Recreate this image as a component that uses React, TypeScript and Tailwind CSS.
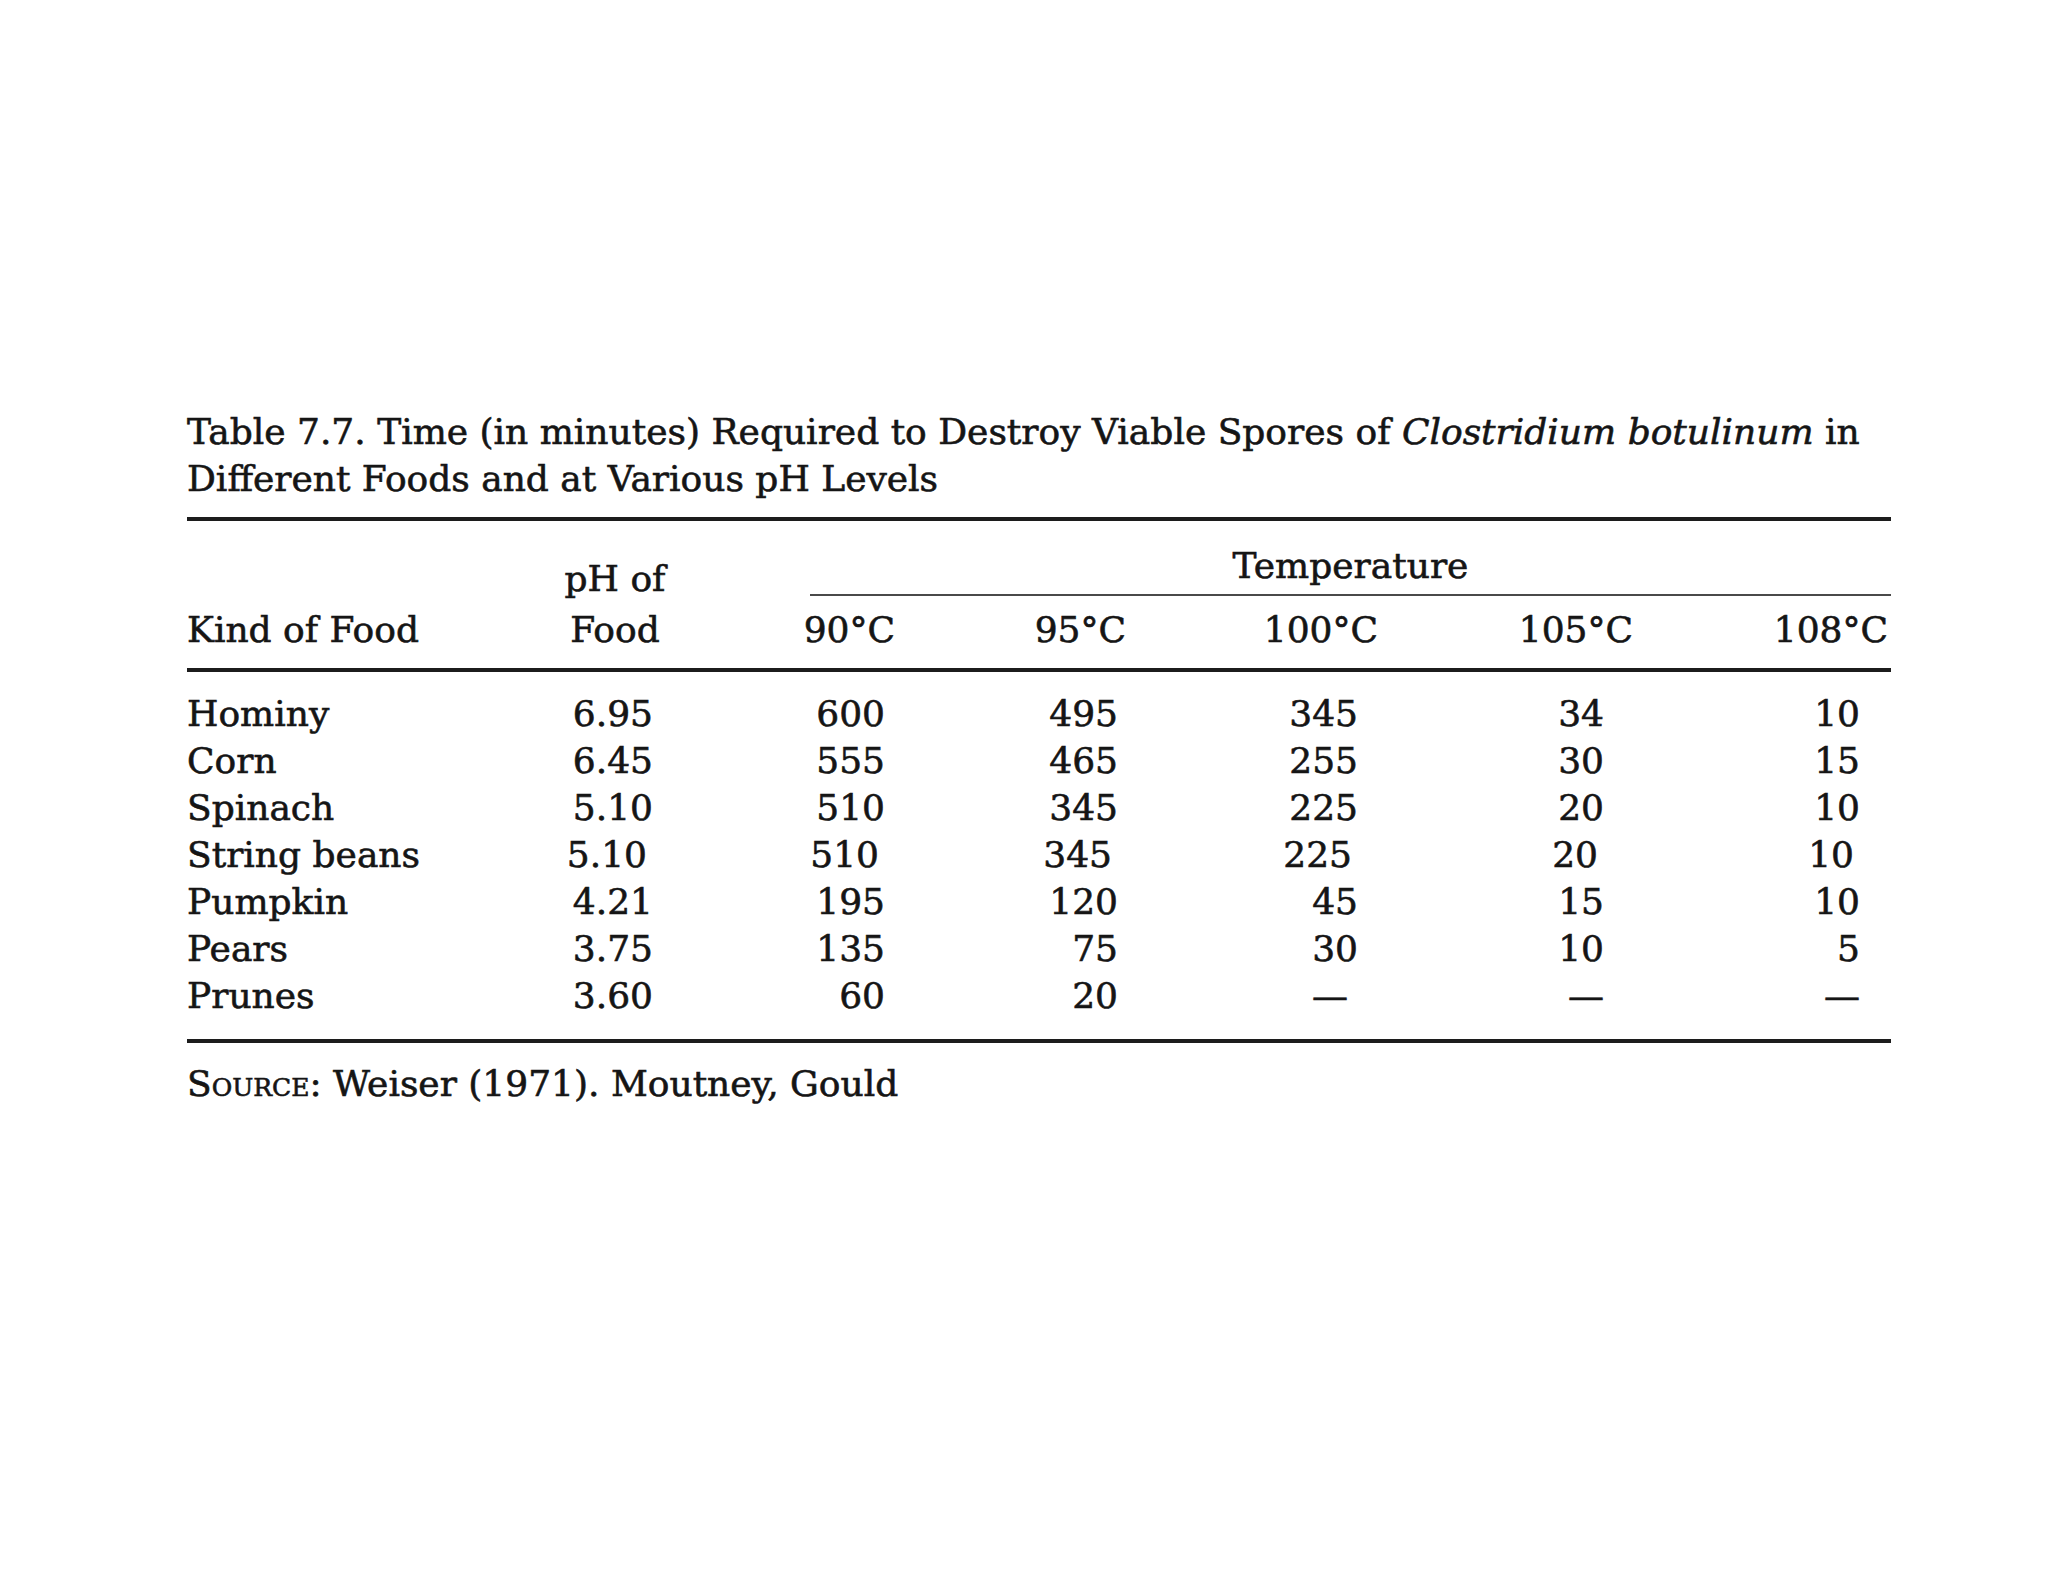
import React from "react";

// Table 7.7 data - times in minutes
const rows = [
  { food: "Hominy", ph: "6.95", t: ["600", "495", "345", "34", "10"] },
  { food: "Corn", ph: "6.45", t: ["555", "465", "255", "30", "15"] },
  { food: "Spinach", ph: "5.10", t: ["510", "345", "225", "20", "10"] },
  { food: "String beans", ph: "5.10", t: ["510", "345", "225", "20", "10"], shifted: true },
  { food: "Pumpkin", ph: "4.21", t: ["195", "120", "45", "15", "10"] },
  { food: "Pears", ph: "3.75", t: ["135", "75", "30", "10", "5"] },
  { food: "Prunes", ph: "3.60", t: ["60", "20", "—", "—", "—"] },
];

const dataCols = ["w-[232px]", "w-[233px]", "w-[240px]", "w-[246px]", "w-[256px]"];
const temps = ["90°C", "95°C", "100°C", "105°C", "108°C"];
const headCols = ["w-[222px]", "w-[231px]", "w-[252px]", "w-[255px]", "w-[255px]"];

export default function App() {
  return (
    <div className="min-h-[1582px] w-[2048px] bg-white text-[#151515] [font-family:'DejaVu_Serif','Liberation_Serif',serif] [-webkit-text-stroke:0.6px_#151515]">
      <div className="ml-[187px] w-[1704px] pt-[408px] text-[36px] leading-[47px]">
        {/* Caption */}
        <div>
          <p className="whitespace-nowrap">
            Table 7.7. Time (in minutes) Required to Destroy Viable Spores of{" "}
            <i>Clostridium botulinum</i> in
          </p>
          <p>Different Foods and at Various pH Levels</p>
        </div>

        <div className="mt-[15px] h-[4px] bg-[#1c1c1c]" />

        {/* Header */}
        <div className="flex h-[75px] items-start">
          <div className="w-[370px]" />
          <div className="w-[116px] pt-[34px] text-center">pH of</div>
          <div className="ml-[137px] w-[1081px] border-b-2 border-[#4a4a4a] pt-[21px] pb-[5px] text-center">
            Temperature
          </div>
        </div>
        <div className="flex pt-[10px] pb-[15px]">
          <div className="w-[370px]">Kind of Food</div>
          <div className="w-[116px] text-center">Food</div>
          {temps.map((t, i) => (
            <div key={t} className={`${headCols[i]} text-right`}>
              {t}
            </div>
          ))}
        </div>
        <div className="h-[4px] bg-[#1c1c1c]" />

        {/* Body */}
        <div className="pt-[18px] pb-[20px]">
          {rows.map((r) => (
            <div key={r.food} className="flex">
              <div className="w-[366px]">{r.food}</div>
              <div className={r.shifted ? "flex -translate-x-[6px]" : "flex"}>
                <div className="w-[100px] text-right">{r.ph}</div>
                {r.t.map((v, i) => (
                  <div
                    key={i}
                    className={`${dataCols[i]} text-right ${v === "—" && i === 2 ? "pr-[10px]" : ""}`}
                  >
                    {v}
                  </div>
                ))}
              </div>
            </div>
          ))}
        </div>
        <div className="h-[4px] bg-[#1c1c1c]" />

        <p className="pt-[17px]">
          <span className="[font-variant-caps:small-caps]">Source:</span> Weiser (1971). Moutney, Gould
        </p>
      </div>
    </div>
  );
}
